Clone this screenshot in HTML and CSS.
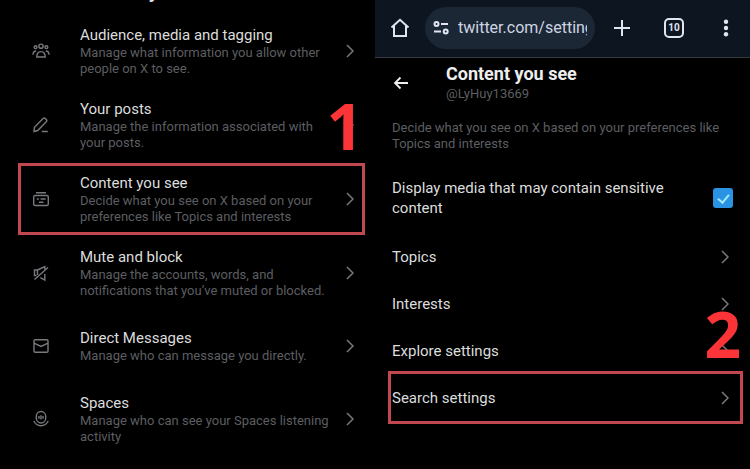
FILE: index.html
```
<!DOCTYPE html>
<html lang="en">
<head>
    <meta charset="UTF-8">
    <meta name="viewport" content="width=device-width, initial-scale=1.0">
    <title>Content you see</title>
    <link rel="stylesheet" href="styles.css">
</head>
<body>
    <main class="screens">
        <section class="screen">
            <h2 class="section-title">Your X activity</h2>
            <ul class="menu">
                <li class="menu-item">
                    <a class="menu-link" href="#audience">
                        <svg class="icon" viewBox="0 0 18 18">
                            <circle cx="9" cy="4.2" r="2.1"/>
                            <circle cx="3.6" cy="5.2" r="1.4"/>
                            <circle cx="14.4" cy="5.2" r="1.4"/>
                            <path d="M4.8 15c0-3.6 1.8-5.4 4.2-5.4s4.2 1.8 4.2 5.4z"/>
                            <path d="M4.2 9C2.3 9 1.1 10.4.9 12.8M13.8 9c1.9 0 3.1 1.4 3.3 3.8"/>
                        </svg>
                        <span class="menu-text">
                            <span class="menu-title">Audience, media and tagging</span>
                            <span class="menu-desc">Manage what information you allow other people on X to see.</span>
                        </span>
                        <svg class="chevron" viewBox="0 0 8 14"><path d="M1 1l6 6-6 6"/></svg>
                    </a>
                </li>
                <li class="menu-item">
                    <a class="menu-link" href="#posts">
                        <svg class="icon" viewBox="0 0 18 18">
                            <path d="M2 15.5l.4-4.3 8.7-8.6q1.1-1 2.2 0l1 1q1.1 1.1 0 2.2l-8.6 8.7zM9.8 15.5h6"/>
                        </svg>
                        <span class="menu-text">
                            <span class="menu-title">Your posts</span>
                            <span class="menu-desc">Manage the information associated with your posts.</span>
                        </span>
                        <svg class="chevron" viewBox="0 0 8 14"><path d="M1 1l6 6-6 6"/></svg>
                    </a>
                </li>
                <li class="menu-item">
                    <a class="menu-link" href="#content">
                        <svg class="icon" viewBox="0 0 18 18">
                            <rect x="1.7" y="5.5" width="14.6" height="10" rx="1.5"/>
                            <path d="M4 2.7h10M4.8 9h2M8.6 9h5M7 12.2h4.5"/>
                        </svg>
                        <span class="menu-text">
                            <span class="menu-title">Content you see</span>
                            <span class="menu-desc">Decide what you see on X based on your preferences like Topics and interests</span>
                        </span>
                        <svg class="chevron" viewBox="0 0 8 14"><path d="M1 1l6 6-6 6"/></svg>
                    </a>
                    <span class="marker marker-first"><b class="step">1</b></span>
                </li>
                <li class="menu-item">
                    <a class="menu-link" href="#mute">
                        <svg class="icon" viewBox="0 0 18 18">
                            <path d="M5.5 6h-3v5.500h2M5.500 6v5M5.500 6l7.300-3.500v3M12.800 10v6l-4.500-2.300M2.500 15.500l13.500-12"/>
                        </svg>
                        <span class="menu-text">
                            <span class="menu-title">Mute and block</span>
                            <span class="menu-desc">Manage the accounts, words, and notifications that you’ve muted or blocked.</span>
                        </span>
                        <svg class="chevron" viewBox="0 0 8 14"><path d="M1 1l6 6-6 6"/></svg>
                    </a>
                </li>
                <li class="menu-item">
                    <a class="menu-link" href="#messages">
                        <svg class="icon" viewBox="0 0 18 18">
                            <rect x="2" y="2.8" width="14" height="12.4" rx="1.2"/>
                            <path d="M2 6.2l7 3.3 7-3.3"/>
                        </svg>
                        <span class="menu-text">
                            <span class="menu-title">Direct Messages</span>
                            <span class="menu-desc">Manage who can message you directly.</span>
                        </span>
                        <svg class="chevron" viewBox="0 0 8 14"><path d="M1 1l6 6-6 6"/></svg>
                    </a>
                </li>
                <li class="menu-item">
                    <a class="menu-link" href="#spaces">
                        <svg class="icon" viewBox="0 0 18 18">
                            <rect x="4.3" y="1.5" width="9.4" height="11.5" rx="4.7"/>
                            <path d="M7 6v2.8M9 5.2v4.4M11 6v2.8M1.800 11c1.500 3.300 4 4.700 7.200 4.700s5.700-1.400 7.200-4.700"/>
                        </svg>
                        <span class="menu-text">
                            <span class="menu-title">Spaces</span>
                            <span class="menu-desc">Manage who can see your Spaces listening activity</span>
                        </span>
                        <svg class="chevron" viewBox="0 0 8 14"><path d="M1 1l6 6-6 6"/></svg>
                    </a>
                </li>
            </ul>
        </section>

        <section class="screen">
            <div class="browser-bar">
                <button class="bar-button" aria-label="Home">
                    <svg class="bar-icon" viewBox="0 0 20 20"><path d="M1.500 9.500L10 1.800l8.500 7.700M4 7.500V18h12V7.500"/></svg>
                </button>
                <div class="address">
                    <svg class="site-icon" viewBox="0 0 16 14">
                        <circle cx="3.5" cy="3" r="2"/><path d="M8 3h7M1 10.500h7"/><circle cx="12.7" cy="10.5" r="2"/>
                    </svg>
                    <input class="address-input" type="text" aria-label="Address" value="twitter.com/settings">
                </div>
                <button class="bar-button" aria-label="New tab">
                    <svg class="bar-icon" viewBox="0 0 20 20"><path d="M10 2v16M2 10h16"/></svg>
                </button>
                <button class="bar-button" aria-label="Tabs"><span class="tab-count">10</span></button>
                <button class="bar-button" aria-label="Menu">
                    <svg class="bar-icon dots" viewBox="0 0 20 20"><circle cx="10" cy="3.7" r="2.2"/><circle cx="10" cy="10" r="2.2"/><circle cx="10" cy="16.3" r="2.2"/></svg>
                </button>
            </div>
            <header class="page-header">
                <button class="back" aria-label="Back">
                    <svg class="back-icon" viewBox="0 0 16 14"><path d="M15 7H2M7.500 1.500L2 7l5.500 5.500"/></svg>
                </button>
                <div>
                    <h1 class="page-title">Content you see</h1>
                    <p class="handle">@LyHuy13669</p>
                </div>
            </header>
            <p class="intro">Decide what you see on X based on your preferences like Topics and interests</p>
            <div class="setting">
                <label class="setting-label" for="sensitive">Display media that may contain sensitive content</label>
                <input class="checkbox" type="checkbox" id="sensitive" checked>
            </div>
            <ul class="options">
                <li class="option">
                    <a class="option-link" href="#topics">Topics <svg class="chevron" viewBox="0 0 8 14"><path d="M1 1l6 6-6 6"/></svg></a>
                </li>
                <li class="option">
                    <a class="option-link" href="#interests">Interests <svg class="chevron" viewBox="0 0 8 14"><path d="M1 1l6 6-6 6"/></svg></a>
                </li>
                <li class="option">
                    <a class="option-link" href="#explore">Explore settings <svg class="chevron" viewBox="0 0 8 14"><path d="M1 1l6 6-6 6"/></svg></a>
                </li>
                <li class="option">
                    <a class="option-link" href="#search">Search settings <svg class="chevron" viewBox="0 0 8 14"><path d="M1 1l6 6-6 6"/></svg></a>
                    <span class="marker marker-second"><b class="step">2</b></span>
                </li>
            </ul>
        </section>
    </main>
</body>
</html>
```
FILE: styles.css
```
* {
    box-sizing: border-box;
}
body {
    margin: 0;
    background-color: #000;
    color: #dcdddd;
    font-family: Roboto, "Liberation Sans", sans-serif;
    font-size: 15px;
    line-height: 20px;
}
h1, h2, p, ul {
    margin: 0;
    padding: 0;
}
ul {
    list-style: none;
}
a {
    color: inherit;
    text-decoration: none;
}
button {
    padding: 0;
    border: 0;
    background: none;
    color: inherit;
}
svg {
    display: block;
    flex: none;
    fill: none;
    stroke: currentColor;
}
.screens {
    display: grid;
    grid-template-columns: minmax(0, 1fr) minmax(0, 1fr);
    min-height: 100vh;
    overflow: hidden;
}

/* Settings list */
.section-title {
    margin: -21px 0 11px 29px;
    font-size: 20px;
    line-height: 24px;
}
.menu-item {
    position: relative;
}
.menu-link {
    display: flex;
    align-items: center;
    min-height: 72px;
    padding: 11px 21px 11px 32px;
}
.icon {
    width: 18px;
    height: 18px;
    margin-right: 30px;
    color: #77797c;
    stroke-width: 1.4;
}
.menu-text {
    flex: 1;
    padding-right: 14px;
}
.menu-title {
    display: block;
}
.menu-desc {
    display: block;
    color: #5c5e61;
    font-size: 13px;
    line-height: 16px;
}
.chevron {
    width: 8px;
    height: 14px;
    color: #77797c;
    stroke-width: 1.5;
}

/* Red step markers */
.marker {
    position: absolute;
    border: 3px solid #c0484e;
    pointer-events: none;
}
.marker-first {
    inset: 1px 10px 1px 18px;
}
.marker-second {
    inset: -3px 7px -3px 13px;
}
.step {
    position: absolute;
    right: -1px;
    bottom: 100%;
    padding-bottom: 8px;
    color: #fb3437;
    font-family: "Open Sans", sans-serif;
    font-size: 64px;
    line-height: 64px;
}

/* Browser bar */
.browser-bar {
    display: flex;
    align-items: center;
    height: 58px;
    padding: 0 14px 2px 15px;
    border-bottom: 1px solid #35383d;
    background-color: #0d1520;
    color: #dfe5f2;
}
.bar-button {
    display: flex;
    flex: none;
    justify-content: center;
    width: 20px;
}
.bar-icon {
    width: 20px;
    height: 20px;
    stroke-width: 2;
}
.dots {
    fill: currentColor;
    stroke: none;
}
.address {
    display: flex;
    flex: 1;
    align-items: center;
    gap: 9px;
    min-width: 0;
    height: 42px;
    margin: 0 17px 0 15px;
    padding: 0 8px;
    border-radius: 21px;
    background-color: #1c2736;
}
.site-icon {
    width: 16px;
    height: 14px;
    stroke-width: 2;
}
.address-input {
    flex: 1;
    min-width: 0;
    padding: 0;
    border: 0;
    background: none;
    color: #cdd5e2;
    font-family: inherit;
    font-size: 16px;
}
.bar-button + .bar-button {
    margin-left: 32px;
}
.tab-count {
    width: 20px;
    border: 2px solid;
    border-radius: 5px;
    font: bold 10px/16px Roboto, sans-serif;
}

/* Content you see */
.page-header {
    display: flex;
    align-items: center;
    gap: 37px;
    padding: 6px 18px 0;
    color: #eee;
}
.back-icon {
    width: 16px;
    height: 14px;
    stroke-width: 1.8;
}
.page-title {
    font-size: 18px;
    line-height: 20px;
}
.handle,
.intro {
    color: #5c5e61;
    font-size: 13px;
    line-height: 16px;
}
.handle {
    padding-top: 2px;
}
.intro {
    padding: 18px 17px 0;
}
.setting {
    display: flex;
    align-items: center;
    justify-content: space-between;
    padding: 26px 17px 0;
}
.setting-label {
    max-width: 290px;
}
.checkbox {
    appearance: none;
    display: grid;
    place-items: center;
    width: 20px;
    height: 20px;
    margin: 0;
    border-radius: 3px;
    background-color: #2b93e3;
}
.checkbox:checked::before {
    content: "";
    width: 5px;
    height: 9px;
    margin-bottom: 2px;
    border: solid #a5ecff;
    border-width: 0 2px 2px 0;
    transform: rotate(40deg);
}
.options {
    padding-top: 15px;
}
.option {
    position: relative;
}
.option-link {
    display: flex;
    align-items: center;
    justify-content: space-between;
    height: 47px;
    padding: 0 21px 0 17px;
}
```
